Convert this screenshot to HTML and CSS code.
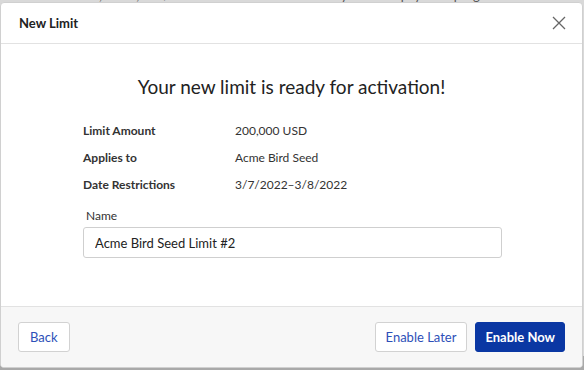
FILE: index.html
```html
<!DOCTYPE html>
<html lang="en">
<head>
    <meta charset="UTF-8">
    <title>New Limit</title>
    <link rel="stylesheet" href="styles.css">
</head>
<body>
<div class="page_bg">
    <p>the total amount, dates, and/or entities that can draw from your bank payment program.</p>
</div>
<div class="modal">
    <div class="modal_head">
        <span class="modal_title">New Limit</span>
        <button class="close_btn" aria-label="Close">
            <svg width="14" height="14" viewBox="0 0 14 14">
                <path d="M1 1L13 13M13 1L1 13" stroke="#666" stroke-width="1.3" fill="none"/>
            </svg>
        </button>
    </div>
    <div class="modal_body">
        <h2>Your new limit is ready for activation!</h2>
        <dl class="summary">
            <dt>Limit Amount</dt><dd>200,000 USD</dd>
            <dt>Applies to</dt><dd>Acme Bird Seed</dd>
            <dt>Date Restrictions</dt><dd>3/7/2022–3/8/2022</dd>
        </dl>
        <label class="field_label" for="limitName">Name</label>
        <input class="field_input" id="limitName" type="text" value="Acme Bird Seed Limit #2">
    </div>
    <div class="modal_foot">
        <button class="btn">Back</button>
        <div class="foot_right">
            <button class="btn btn_later">Enable Later</button>
            <button class="btn btn_primary">Enable Now</button>
        </div>
    </div>
</div>
</body>
</html>
```

FILE: styles.css
```css
*{
    margin: 0;
    padding: 0;
    box-sizing: border-box;
}
body{
    width: 584px;
    height: 370px;
    overflow: hidden;
    background: #a9a9a9;
    font-family: "Lato", "Open Sans", sans-serif;
    color: #222;
    position: relative;
}
.page_bg{
    background: #d9d9d9;
    height: 368px;
}
.page_bg p{
    font-size: 13px;
    line-height: 14px;
    margin-top: -12px;
    padding-left: 4px;
    color: #555;
}
.modal{
    position: absolute;
    left: 0;
    top: 2px;
    width: 583px;
    height: 366px;
    background: #fff;
    border: 1px solid #d0d0d0;
    border-radius: 4px;
    display: flex;
    flex-direction: column;
    overflow: hidden;
}
.modal_head{
    height: 41px;
    border-bottom: 1px solid #e2e2e2;
    display: flex;
    align-items: center;
    justify-content: space-between;
    padding: 0 16px 0 18px;
}
.modal_title{
    font-size: 13px;
    font-weight: 700;
    color: #222;
}
.close_btn{
    border: none;
    background: none;
    display: flex;
}
.modal_body{
    flex: 1;
    padding: 0 82px;
}
.modal_body h2{
    font-size: 19px;
    font-weight: 400;
    text-align: center;
    color: #222;
    margin-top: 31px;
    line-height: 24px;
}
.summary{
    display: grid;
    grid-template-columns: 152px 1fr;
    row-gap: 10px;
    margin-top: 23px;
    font-size: 12px;
    line-height: 17px;
}
.summary dt{
    font-weight: 700;
    color: #333;
}
.summary dd{
    color: #333;
}
.field_label{
    display: block;
    font-size: 12px;
    color: #333;
    margin: 15px 0 0 3px;
    line-height: 16px;
}
.field_input{
    display: block;
    width: 419px;
    height: 31px;
    margin-top: 3px;
    border: 1px solid #cfcfcf;
    border-radius: 3px;
    padding: 0 11px;
    font-family: inherit;
    font-size: 13px;
    color: #222;
}
.modal_foot{
    height: 61px;
    background: #f7f7f7;
    border-top: 1px solid #e2e2e2;
    display: flex;
    align-items: center;
    justify-content: space-between;
    padding: 0 17px 1px 17px;
}
.foot_right{
    display: flex;
    gap: 8px;
}
.btn{
    height: 30px;
    padding: 0 11px;
    border: 1px solid #d2d2d2;
    border-radius: 3px;
    background: #fff;
    color: #2d4fb8;
    font-family: inherit;
    font-size: 13px;
}
.btn_later{
    padding: 0 10px;
}
.btn_primary{
    padding: 0 9px;
    background: #0a37a3;
    border-color: #0a37a3;
    color: #fff;
    font-weight: 700;
}
```
